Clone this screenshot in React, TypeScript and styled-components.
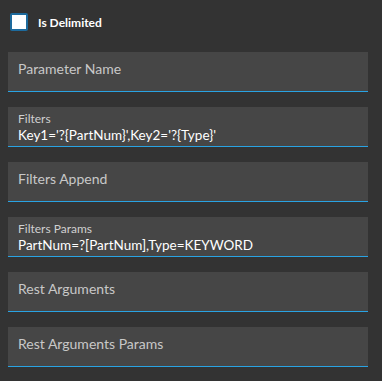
import React, { useState } from "react";
import styled, { createGlobalStyle } from "styled-components";

const fields: Array<{ label: string; value?: string }> = [
  { label: "Parameter Name" },
  { label: "Filters", value: "Key1='?{PartNum}',Key2='?{Type}'" },
  { label: "Filters Append" },
  { label: "Filters Params", value: "PartNum=?[PartNum],Type=KEYWORD" },
  { label: "Rest Arguments" },
  { label: "Rest Arguments Params" },
];

export default function App() {
  const [delimited, setDelimited] = useState(false);

  return (
    <>
      <GlobalStyle />
      <Panel>
        <CheckRow onClick={() => setDelimited(!delimited)}>
          <Box $checked={delimited} />
          <CheckLabel>Is Delimited</CheckLabel>
        </CheckRow>
        <FieldList>
          {fields.map((f) => (
            <Field key={f.label} $filled={!!f.value}>
              {f.value ? (
                <>
                  <SmallLabel>{f.label}</SmallLabel>
                  <Value>{f.value}</Value>
                </>
              ) : (
                <Placeholder>{f.label}</Placeholder>
              )}
            </Field>
          ))}
        </FieldList>
      </Panel>
    </>
  );
}

const GlobalStyle = createGlobalStyle`
  html, body {
    margin: 0;
    background: #333333;
    font-family: Lato, "Open Sans", sans-serif;
  }
`;

const Panel = styled.div`
  width: 382px;
  height: 381px;
  box-sizing: border-box;
  padding: 13px 14px 0 8px;
  display: flex;
  flex-direction: column;
`;

const CheckRow = styled.label`
  display: flex;
  align-items: center;
  gap: 10px;
  padding-left: 2px;
  height: 18px;
  cursor: pointer;
`;

const Box = styled.span<{ $checked: boolean }>`
  width: 18px;
  height: 18px;
  box-sizing: border-box;
  border: 2px solid #1d6a9c;
  border-radius: 2px;
  background: ${(p) => (p.$checked ? "#1d6a9c" : "#ffffff")};
`;

const CheckLabel = styled.span`
  color: #ffffff;
  font-size: 12px;
  font-weight: 700;
`;

const FieldList = styled.div`
  margin-top: 21px;
  display: flex;
  flex-direction: column;
  gap: 15px;
`;

const Field = styled.div<{ $filled: boolean }>`
  height: 40px;
  box-sizing: border-box;
  background: #464646;
  border-bottom: 1px solid #29a3e3;
  padding: ${(p) => (p.$filled ? "5px 10px 0" : "7px 10px 0")};
  display: flex;
  flex-direction: column;
`;

const Placeholder = styled.span`
  color: #c8c8c8;
  font-size: 14px;
  line-height: 20px;
`;

const SmallLabel = styled.span`
  color: #d0d0d0;
  font-size: 12px;
  line-height: 14px;
`;

const Value = styled.span`
  color: #ffffff;
  font-size: 13.5px;
  line-height: 18px;
  white-space: nowrap;
`;
